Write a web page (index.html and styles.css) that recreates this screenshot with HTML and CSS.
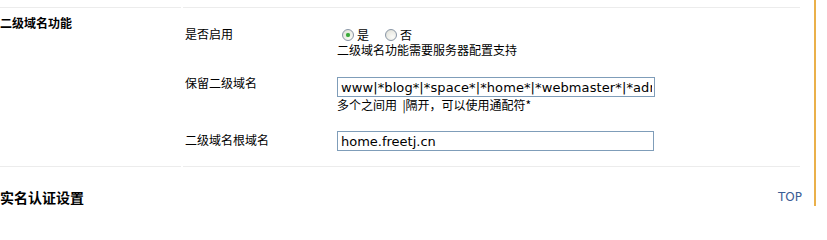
FILE: index.html
```html
<!DOCTYPE html>
<html lang="zh-CN">
<head>
<meta charset="utf-8">
<title>二级域名功能</title>
<link rel="stylesheet" href="styles.css">
</head>
<body>
<div class="page">
  <div class="section">
    <div class="sec-title">二级域名功能</div>
    <div class="sec-body">
      <div class="row row-1">
        <div class="label">是否启用</div>
        <div class="value">
          <div class="radios">
            <label class="opt"><input type="radio" name="enable" class="radio" checked><span>是</span></label>
            <label class="opt"><input type="radio" name="enable" class="radio"><span>否</span></label>
          </div>
          <div class="help">二级域名功能需要服务器配置支持</div>
        </div>
      </div>
      <div class="row row-2">
        <div class="label">保留二级域名</div>
        <div class="value">
          <input class="txt" type="text" value="www|*blog*|*space*|*home*|*webmaster*|*admin*|*bbs*">
          <div class="help help-2">多个之间用&nbsp; |隔开，可以使用通配符*</div>
        </div>
      </div>
      <div class="row row-3">
        <div class="label label-3">二级域名根域名</div>
        <div class="value">
          <input class="txt" type="text" value="home.freetj.cn">
        </div>
      </div>
    </div>
  </div>
  <div class="next">
    <h3 class="next-title">实名认证设置</h3>
    <a class="top" href="#">TOP</a>
  </div>
</div>
</body>
</html>
```
FILE: styles.css
```css
html, body {
  margin: 0;
  padding: 0;
  background: #fff;
  overflow: hidden;
}
body {
  font-family: "Noto Sans CJK SC", "DejaVu Sans", sans-serif;
  font-size: 12px;
  color: #000;
}
.page {
  width: 800px;
  height: 199px;
  padding-top: 7px;
  padding-right: 14px;
  border-right: 2px solid #eab04a;
  box-sizing: content-box;
  overflow: hidden;
}
.section {
  display: flex;
  gap: 2px;
}
.sec-title {
  width: 181px;
  flex: none;
  border-top: 1px solid #ececec;
  border-bottom: 1px solid #ececec;
  padding-top: 7px;
  font-weight: bold;
  line-height: 16px;
  font-size: 12px;
}
.sec-body {
  flex: 1;
  border-top: 1px solid #ececec;
  border-bottom: 1px solid #ececec;
  padding: 18px 0 15px 2px;
}
.row {
  display: flex;
  align-items: flex-start;
}
.row-2 { margin-top: 17px; }
.row-3 { margin-top: 18px; }
.label {
  width: 152px;
  flex: none;
  line-height: 16px;
}
.label-3 { padding-top: 1px; }
.value {
  display: flex;
  flex-direction: column;
  align-items: flex-start;
}
.radios {
  display: flex;
  align-items: center;
  height: 16px;
}
.opt {
  display: flex;
  align-items: center;
  margin-right: 11px;
}
.radio {
  appearance: none;
  -webkit-appearance: none;
  width: 12px;
  height: 12px;
  margin: 1px 3px 0 5px;
  border: 1px solid #8996a6;
  border-radius: 50%;
  background: radial-gradient(circle at 65% 70%, #fbfbf8 0%, #ececE6 55%, #d6d6ce 100%);
  position: relative;
  box-sizing: border-box;
}
.radio:checked::after {
  content: "";
  position: absolute;
  left: 3px;
  top: 3px;
  width: 4px;
  height: 4px;
  border-radius: 50%;
  background: #3aa83a;
  box-shadow: 0 0 1px #6fd06f;
}
.help {
  line-height: 16px;
}
.txt {
  width: 318px;
  height: 20px;
  margin: 2px 0 0;
  padding: 0 2px 0 3px;
  border: 1px solid #7f9db9;
  box-sizing: border-box;
  font-family: "DejaVu Sans", sans-serif;
  font-size: 13px;
  letter-spacing: 0.1px;
  color: #000;
  background: #fff;
  outline: none;
}
.row-3 .txt {
  margin-top: 0;
  width: 317px;
  letter-spacing: 0;
}
.next {
  display: flex;
  justify-content: space-between;
  align-items: flex-start;
  padding-top: 21px;
}
.next-title {
  margin: 0;
  font-size: 14px;
  font-weight: bold;
  line-height: 18px;
  padding-top: 0;
}
.top {
  font-family: "DejaVu Sans", sans-serif;
  font-size: 12px;
  color: #3a5d94;
  text-decoration: none;
  line-height: 14px;
  margin-top: 2px;
  margin-right: -2px;
}
```
